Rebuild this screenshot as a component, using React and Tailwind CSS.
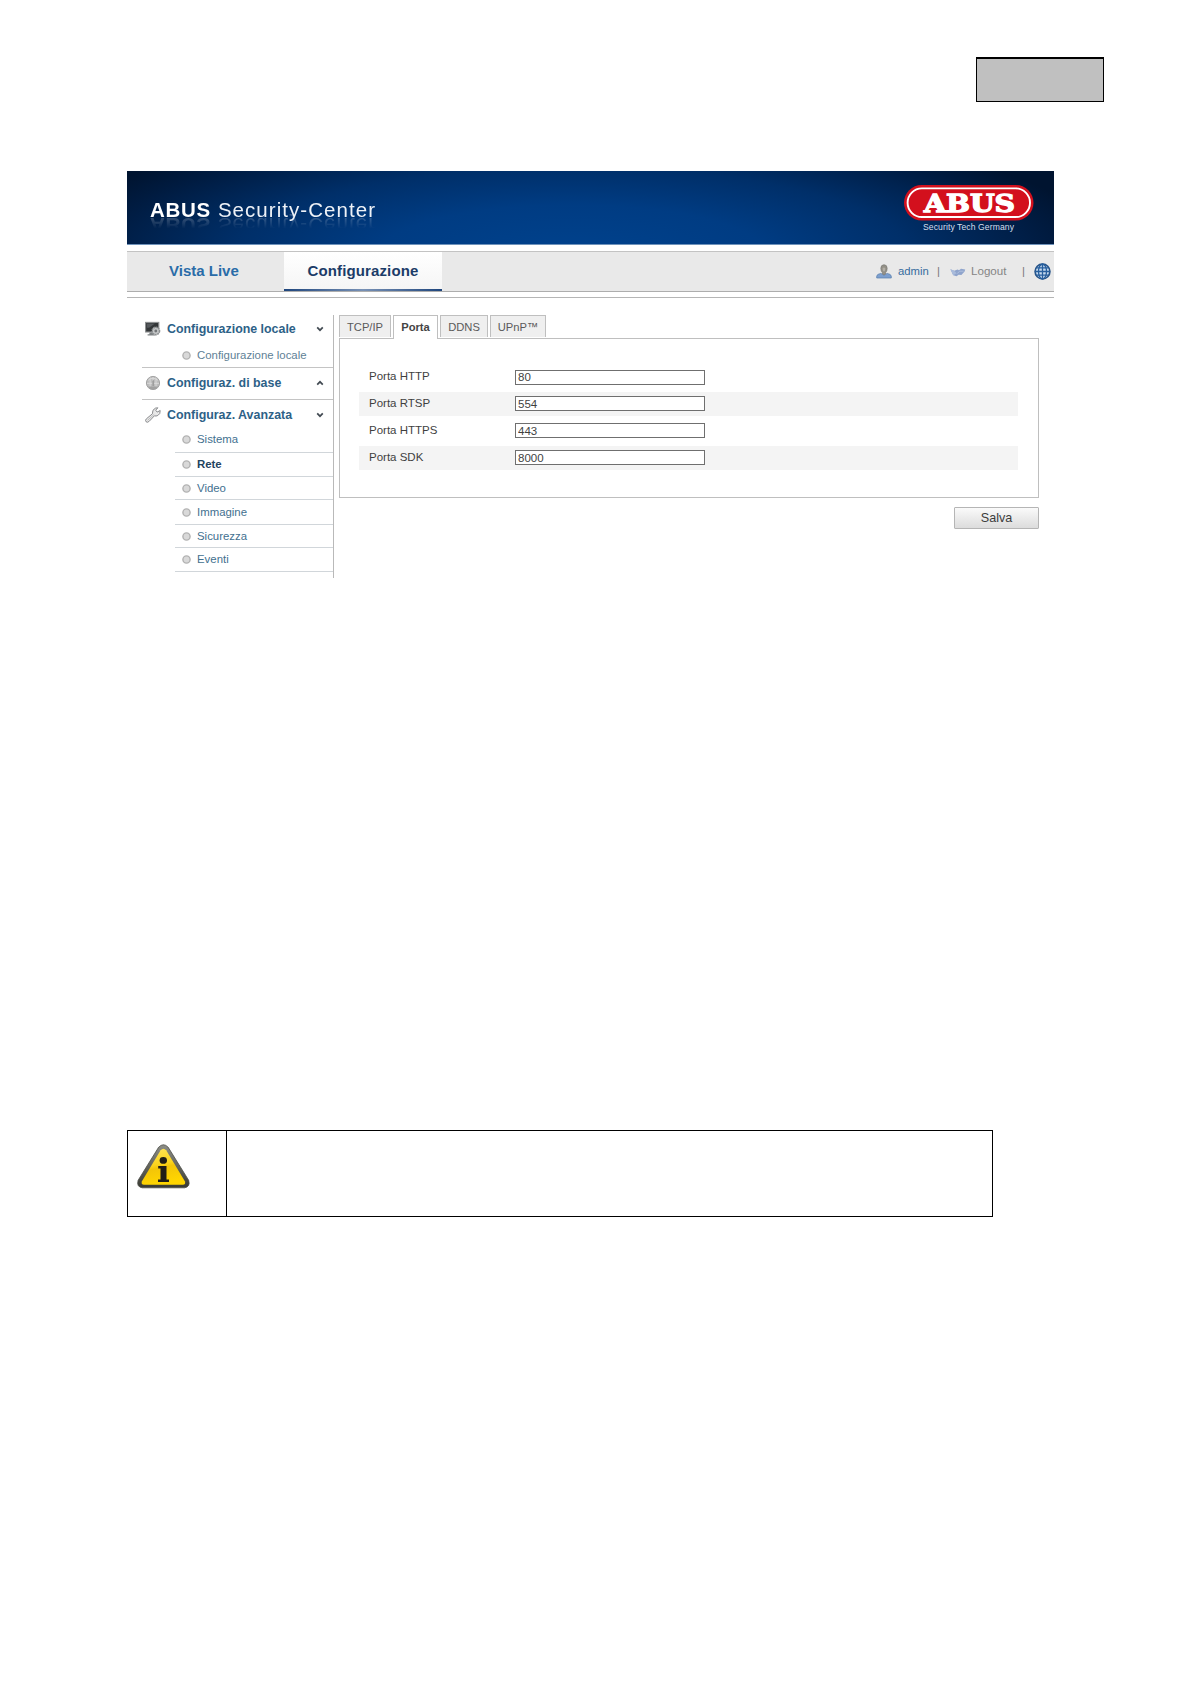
import React, { useState } from 'react';

const advancedItems = [
  { label: 'Sistema', height: 'h-[26px]' },
  { label: 'Rete', height: 'h-6' },
  { label: 'Video', height: 'h-[23px]' },
  { label: 'Immagine', height: 'h-[25px]' },
  { label: 'Sicurezza', height: 'h-[23px]' },
  { label: 'Eventi', height: 'h-6' }
];

const tabs = [
  { label: 'TCP/IP', width: 'w-[52px]' },
  { label: 'Porta', width: 'w-[45px]' },
  { label: 'DDNS', width: 'w-[48px]' },
  { label: 'UPnP™', width: 'w-[56px]' }
];

const ports = [
  { label: 'Porta HTTP', value: '80' },
  { label: 'Porta RTSP', value: '554' },
  { label: 'Porta HTTPS', value: '443' },
  { label: 'Porta SDK', value: '8000' }
];

function AbusLogo() {
  return (
    <svg className="block h-[50px] w-[130px]" viewBox="0 0 130 50">
      <rect x="0" y="0" width="129.5" height="35.5" rx="17.7" fill="#d3101d" />
      <rect x="3.6" y="3.4" width="122.4" height="28.6" rx="14.3" fill="none" stroke="#fff" strokeWidth="1.9" />
      <text
        x="20"
        y="27"
        fontFamily="'DejaVu Serif', serif"
        fontWeight="bold"
        fontSize="24"
        textLength="91"
        lengthAdjust="spacingAndGlyphs"
        fill="#fff"
        stroke="#fff"
        strokeWidth="1.3"
      >
        ABUS
      </text>
      <text x="19" y="44.6" fontFamily="'Liberation Sans', sans-serif" fontSize="8.6" textLength="91" fill="#d5dfed">
        Security Tech Germany
      </text>
    </svg>
  );
}

function UserIcon() {
  return (
    <svg className="block h-[15px] w-4" viewBox="0 0 16 15">
      <path d="M0.7 14V12.2Q0.9 10 4.8 9.4L8 11l3.2-1.6Q15 10 15.3 12.2V14Z" fill="#7d9fce" stroke="#587eae" strokeWidth="0.7" />
      <path d="M4.8 4.3Q4.9 0.7 8 0.7T11.2 4.3Q11.2 7.2 9.6 8.6V10L8 11 6.4 10V8.6Q4.8 7.2 4.8 4.3Z" fill="#939087" stroke="#74736f" strokeWidth="0.6" />
      <path d="M6.5 4.4Q8 2.5 9.4 4.4L8.8 7.3H7.1Z" fill="#b3afa6" />
    </svg>
  );
}

function LogoutIcon() {
  return (
    <svg className="block h-[10px] w-4" viewBox="0 0 16 10">
      <path d="M0.4 2.2 4.2 3.8 7.6 2.4 9 3.2 11 1.8 15.2 2.4 14.6 4.6 11.4 8 8.6 7.8 6.6 9.2 3.2 8.2Z" fill="#8fa4cc" />
      <path d="M0.4 2.2 4.2 3.8 6.6 6.2 3.2 8.2Z" fill="#a9bbdb" />
      <path d="M7.2 6.6 9.6 4.2 13.6 4.2" fill="none" stroke="#b9c8e2" strokeWidth="0.8" />
    </svg>
  );
}

function GlobeIcon() {
  return (
    <svg className="block size-[17px]" viewBox="0 0 17 17" fill="none">
      <circle cx="8.5" cy="8.5" r="7.4" fill="#c5d9ee" stroke="#275489" strokeWidth="1.7" />
      <path d="M8.5 1V16M1 8.5H16M2.5 4.8H14.5M2.5 12.2H14.5" stroke="#275f9e" strokeWidth="1.3" />
      <ellipse cx="8.5" cy="8.5" rx="4" ry="7.5" stroke="#275f9e" strokeWidth="1.3" />
    </svg>
  );
}

function MonitorIcon() {
  return (
    <svg className="block size-4" viewBox="0 0 16 16">
      <rect x="0.6" y="1.4" width="13.2" height="9.6" fill="#333638" stroke="#8e9192" strokeWidth="1.1" />
      <path d="M2 2.4H10L4 6.8H2Z" fill="#55595c" />
      <path d="M4.4 11.4H8V13.2H10V14.5H2.6V13.2H4.4Z" fill="#7e8284" />
      <circle cx="10.8" cy="10" r="3.7" fill="#c5c7c8" stroke="#8b8e90" strokeWidth="1.6" strokeDasharray="1.7 0.7" />
      <circle cx="10.8" cy="10" r="1.4" fill="#737678" />
    </svg>
  );
}

function SphereIcon() {
  return (
    <svg className="block size-4" viewBox="0 0 16 16">
      <circle cx="8" cy="8" r="6.6" fill="#bcbcbc" stroke="#a3a3a3" strokeWidth="1" />
      <path d="M3.1 5.3Q8 1.2 12.9 5.3M2 8.3H14M5.1 2.5V12.8M8 1.9V13.8M11 2.5V12.8" fill="none" stroke="#dedede" strokeWidth="0.8" />
      <path d="M7.3 5.7 9 5V11.3H7.3Z" fill="#9d9d9d" />
      <path d="M3.2 11.4H12.8L10.9 14H5.1Z" fill="#a1a1a1" />
    </svg>
  );
}

function WrenchIcon() {
  return (
    <svg className="block size-4" viewBox="0 0 16 16">
      <path
        d="M1 14.7Q-0.2 13.3 1.4 11.8L7.4 6.8Q7 2.6 10.5 1.1L12.9 0.8 10.7 3.2 12.1 5.1 15.2 3.5Q15.5 7 12.8 8.5 11 9.4 9.4 8.8L4.2 14.3Q2.4 16 1 14.7Z"
        fill="#e8e8e8"
        stroke="#8b8c8f"
        strokeWidth="1"
      />
      <path d="M2.5 13.4 9.2 7.3" stroke="#b3b3b3" strokeWidth="0.8" />
    </svg>
  );
}

function Chevron({ up }) {
  return (
    <svg className="block h-[6px] w-2" viewBox="0 0 8 6" fill="none">
      <path d={up ? 'M1.2 4.6 4 1.8 6.8 4.6' : 'M1.2 1.4 4 4.2 6.8 1.4'} stroke="#424a52" strokeWidth="1.7" />
    </svg>
  );
}

function Bullet() {
  return (
    <svg className="mr-[6px] mb-px block size-[9px]" viewBox="0 0 9 9">
      <circle cx="4.5" cy="4.5" r="3.6" fill="#d9d9d9" stroke="#b2b2b2" strokeWidth="1.4" />
    </svg>
  );
}

function SectionTitle({ icon, label, up }) {
  return (
    <div className="flex h-6 items-center pr-[9px] pl-[3px]">
      {icon}
      <span className="ml-[6px] flex-1 text-[12.4px] font-bold whitespace-nowrap text-[#2d6187]">{label}</span>
      <Chevron up={up} />
    </div>
  );
}

function InfoTriangle() {
  return (
    <svg className="block h-[45px] w-[53px]" viewBox="0 0 53 45">
      <defs>
        <linearGradient id="rim" x1="0" y1="0" x2="0" y2="1">
          <stop offset="0" stopColor="#8d8e87" />
          <stop offset="1" stopColor="#393a31" />
        </linearGradient>
        <linearGradient id="sign" x1="0" y1="0" x2="0.25" y2="1">
          <stop offset="0" stopColor="#ffe65e" />
          <stop offset="0.5" stopColor="#fbd41d" />
          <stop offset="0.6" stopColor="#f3c508" />
          <stop offset="1" stopColor="#ffd500" />
        </linearGradient>
      </defs>
      <path
        d="M21.6 3.3Q26.4-1.8 31.2 3.3L51.6 36.2Q53.6 42.8 47.6 43.8H5.2Q-0.8 42.8 1.2 36.2Z"
        fill="url(#rim)"
        stroke="#4b4c47"
        strokeWidth="0.8"
      />
      <path d="M23.6 6.3Q26.4 3.1 29.2 6.3L48 37.4Q48.8 40.6 45.8 40.8H7Q4 40.6 4.8 37.4Z" fill="url(#sign)" />
      <ellipse cx="26.3" cy="16.4" rx="3.7" ry="3.4" fill="#211e16" />
      <path d="M21.2 22H29.5V35.4H32V38H21V35.4H23.5V24.6H21.2Z" fill="#211e16" />
    </svg>
  );
}

function Header() {
  return (
    <header className="flex h-[74px] justify-between border-b border-[#6f93bb] bg-[radial-gradient(ellipse_58%_190%_at_48%_115%,#00428d_0%,#003c83_36%,#002f69_63%,#001c42_88%,#001430_100%)] pr-5 pl-[23px]">
      <div className="mt-[27px] h-6 text-[20.5px] leading-6 whitespace-nowrap text-[#eef2f7] [-webkit-box-reflect:below_-9px_linear-gradient(transparent_35%,rgba(255,255,255,0.22)_82%)]">
        <span className="font-bold tracking-[0.7px] text-white">ABUS</span>
        <span className="ml-[7px] tracking-[1.05px]">Security-Center</span>
      </div>
      <div className="mt-[14px]">
        <AbusLogo />
      </div>
    </header>
  );
}

function NavBar() {
  return (
    <nav className="mt-[6px] flex h-[41px] justify-between border-t border-b border-t-[#c3c3c3] border-b-[#adadad] bg-[#e9e9e9]">
      <div className="flex text-[15px] font-bold">
        <a className="flex w-[157px] items-center pb-px pl-[42px] text-[#2a6ca8]">Vista Live</a>
        <a className="flex h-[39px] w-[158px] flex-col bg-linear-to-b from-white to-[#f5f5f5] text-center text-[#1b3c68]">
          <span className="flex-1 leading-[37px] tracking-[0.12px]">Configurazione</span>
          <span className="h-[3px] bg-linear-to-r from-[#1f467d] via-[#7891b5] to-[#1f467d]" />
        </a>
      </div>
      <div className="flex items-center pr-[3px] text-[11.3px] text-[#858585]">
        <UserIcon />
        <span className="ml-[6px] w-[31px] pb-px text-[#376c9e]">admin</span>
        <span className="ml-[8px] w-[13px] pb-px text-[#777]">|</span>
        <LogoutIcon />
        <span className="ml-[5px] w-[51px] pb-px text-[11.6px]">Logout</span>
        <span className="w-3 pb-px text-[#777]">|</span>
        <GlobeIcon />
      </div>
    </nav>
  );
}

function Sidebar() {
  return (
    <aside className="h-[263px] w-[192px] border-r border-[#b9b9b9] text-[11.4px] text-[#42708f]">
      <div className="h-[53px] border-b border-[#c4c4c4] pt-[2px]">
        <SectionTitle icon={<MonitorIcon />} label="Configurazione locale" />
        <div className="flex h-[29px] items-center pl-10 whitespace-nowrap text-[#607f96]">
          <Bullet />
          <span>Configurazione locale</span>
        </div>
      </div>
      <div className="h-8 border-b border-[#c4c4c4] pt-[3px]">
        <SectionTitle icon={<SphereIcon />} label="Configuraz. di base" up />
      </div>
      <div className="pt-[3px]">
        <SectionTitle icon={<WrenchIcon />} label="Configuraz. Avanzata" />
        <ul className="ml-[33px]">
          {advancedItems.map((item) => (
            <li key={item.label} className={`flex items-center border-b border-[#d1d6da] pl-[7px] pt-px ${item.height}`}>
              <Bullet />
              <span className={item.label === 'Rete' ? 'font-bold text-[#23435f]' : ''}>{item.label}</span>
            </li>
          ))}
        </ul>
      </div>
    </aside>
  );
}

function PortSettings() {
  const [activeTab, setActiveTab] = useState('Porta');

  return (
    <main className="ml-[5px] w-[700px]">
      <div className="flex h-[23px] gap-[2px] text-[11.2px] text-[#5a5a5a]">
        {tabs.map((tab) => (
          <button
            key={tab.label}
            onClick={() => setActiveTab(tab.label)}
            className={`border-t border-r border-l border-[#bfbfbf] ${tab.width} ${
              activeTab === tab.label ? 'h-6 bg-white pb-px font-bold text-[#444]' : 'h-[22px] bg-[#efefef] pt-px'
            }`}
          >
            {tab.label}
          </button>
        ))}
      </div>
      <div className="h-[160px] border border-[#bfbfbf] pt-[26px] pr-5 pl-[19px] text-[11.5px] text-[#3f3f3f]">
        {ports.map((port, index) => (
          <div key={port.label} className={`mb-[2.9px] flex h-6 items-center pl-[10px] ${index % 2 ? 'bg-[#f4f4f4]' : ''}`}>
            <label className="w-[146px]">{port.label}</label>
            <input
              defaultValue={port.value}
              className="h-[15px] w-[190px] border border-[#6f6f6f] bg-white px-[2px] leading-none outline-none"
            />
          </div>
        ))}
      </div>
      <div className="mt-[9px] flex justify-end">
        <button className="h-[22px] w-[85px] rounded-[1px] border border-[#b5b5b5] bg-linear-to-b from-[#fafafa] to-[#dcdcdc] text-[12.6px] leading-5 text-[#3c3c3c]">
          Salva
        </button>
      </div>
    </main>
  );
}

function App() {
  return (
    <div className="flex h-[1684px] w-[1191px] flex-col bg-white font-['Liberation_Sans',Arial,sans-serif]">
      <div className="mt-[57px] ml-[976px] h-[45px] w-32 border border-t-2 border-black bg-[#c0c0c0]" />

      {/* Interfaccia web della telecamera */}
      <div className="mt-[69px] ml-[127px] h-[407px] w-[927px]">
        <Header />
        <NavBar />
        <div className="mt-[5px] h-px bg-[#b5b5b5]" />
        <div className="mt-[17px] flex pl-[15px]">
          <Sidebar />
          <PortSettings />
        </div>
      </div>

      {/* Riquadro informativo */}
      <div className="mt-[552px] ml-[127px] flex h-[87px] w-[866px] border border-black">
        <div className="w-[99px] border-r border-black pt-[13px] pl-[9px]">
          <InfoTriangle />
        </div>
        <div className="flex-1" />
      </div>
    </div>
  );
}

export default App;
